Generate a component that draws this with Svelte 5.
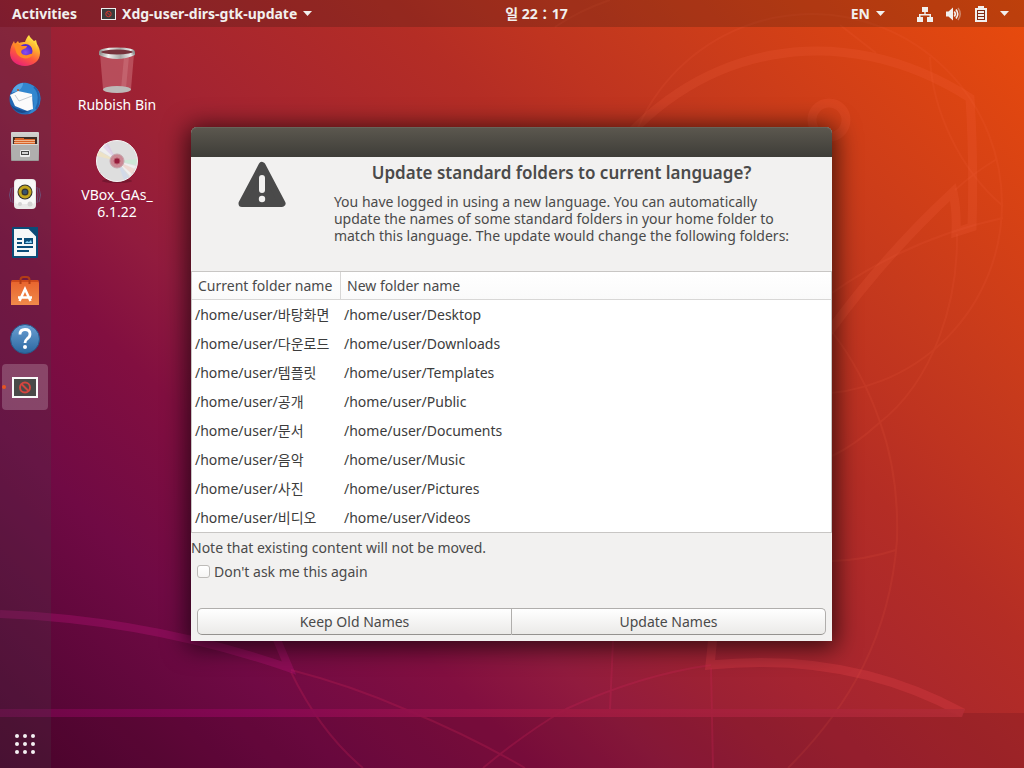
<script>
  const folders = [
    ['바탕화면', 'Desktop'],
    ['다운로드', 'Downloads'],
    ['템플릿', 'Templates'],
    ['공개', 'Public'],
    ['문서', 'Documents'],
    ['음악', 'Music'],
    ['사진', 'Pictures'],
    ['비디오', 'Videos']
  ];
  const home = '/home/user/';
  const dots = [16, 24, 32];
  let skip = $state(false);
</script>

{#snippet caret()}
  <svg class="caret" viewBox="0 0 9 5" aria-hidden="true"><path d="M0 0h9L4.500 5z" fill="#f2f0ee" /></svg>
{/snippet}

<div class="desktop">
  <svg class="wallpaper" viewBox="0 0 1024 768" preserveAspectRatio="none" aria-hidden="true">
    <rect y="713" width="1024" height="55" fill="#3c0014" opacity=".14" />
    <g fill="none" stroke="#ff6a4a" stroke-width="2" opacity=".1">
      <circle cx="812" cy="204" r="190" />
      <path d="M840 25l36 28M930 57C932 110 960 170 1003 206M997 159Q975 172 955 190M1003 218Q910 238 832 293" />
      <path d="M957 234C958 300 935 380 878 424Q855 445 832 456M832 332Q862 370 880 422Q899 475 897 540C890 635 850 706 788 768" />
      <path d="M832 561Q865 560 896 550M555 27Q580 10 610 0" />
    </g>
    <g fill="none" stroke="#ff6a4a" stroke-width="9" opacity=".15">
      <path d="M600 170C690 42 842 16 970 98Q974 160 972 227L956 232Q957 210 953 192Q885 255 829 332" />
      <circle cx="829" cy="120" r="17" />
    </g>
    <path d="M713 636L710 665Q850 651 963 713" fill="none" stroke="#e8444c" stroke-width="9" opacity=".28" />
    <path d="M613 641L610 709M711 668L713 768M711 665Q640 675 566 709Q525 733 483 768M291 670Q350 685 407 710Q470 736 525 768M291 672Q320 732 363 768" fill="none" stroke="#d02458" stroke-width="2" opacity=".25" />
    <path d="M0 614Q150 620 289 668L272 628" fill="none" stroke="#c51482" stroke-width="8" opacity=".3" />
    <defs>
      <linearGradient id="band"><stop stop-color="#700648" /><stop offset=".26" stop-color="#870754" /><stop offset=".6" stop-color="#a01a42" /><stop offset="1" stop-color="#b12c34" /></linearGradient>
    </defs>
    <path d="M0 709H965L962 717H0z" fill="url(#band)" opacity=".9" />
  </svg>

  <header class="topbar">
    <div class="group left">
      <button>Activities</button>
      <button class="app">
        <svg width="15" height="12" viewBox="0 0 15 12" aria-hidden="true">
          <rect x=".5" y=".5" width="14" height="11" fill="#3b3b3b" stroke="#eee" />
          <circle cx="7.500" cy="6" r="2.700" fill="none" stroke="#d8362f" /><path d="M5.600 4.100l3.800 3.800" stroke="#d8362f" />
        </svg>
        Xdg-user-dirs-gtk-update
        {@render caret()}
      </button>
    </div>
    <button class="clock">일 22：17</button>
    <div class="group right">
      <button class="lang">EN {@render caret()}</button>
      <button class="status" aria-label="System menu">
        <svg width="16" height="16" viewBox="0 0 16 16" fill="#f2f0ee" aria-hidden="true">
          <path d="M5 1h6v5H8.700v2H14v3h2v5h-6v-5h2.500V9.500h-9V11H6v5H0v-5h2V8h5.300V6H5z" />
        </svg>
        <svg width="16" height="16" viewBox="0 0 16 16" fill="none" stroke="#f2f0ee" aria-hidden="true">
          <path d="M0 5.500h2.500L7 1.500v13L2.500 10.500H0z" fill="#f2f0ee" stroke="none" />
          <path d="M8.300 5.500q2 2.500 0 5M10 3.500q3.500 4.500 0 9" stroke-width="1.600" />
          <path d="M12 2q4.500 6 0 12" stroke-width="1.500" opacity=".4" />
        </svg>
        <svg width="12" height="16" viewBox="0 0 12 16" aria-hidden="true">
          <path d="M3 0h6v2h3v14H0V2h3z" fill="#f2f0ee" /><path d="M2 4h8v10H2z" fill="#7f2a14" />
          <path d="M3 5h6v2H3zM3 8h6v2H3zM3 11h6v2H3z" fill="#f2f0ee" />
        </svg>
        {@render caret()}
      </button>
    </div>
  </header>

  <nav class="dock" aria-label="Dock">
    <button aria-label="Firefox">
      <svg viewBox="-1 0 48 48">
        <defs>
          <linearGradient id="fx" x1=".8" y1="0" x2=".3" y2="1"><stop stop-color="#fff44f" /><stop offset=".35" stop-color="#ffb12e" /><stop offset=".65" stop-color="#ff5a3c" /><stop offset="1" stop-color="#e81f78" /></linearGradient>
          <radialGradient id="fx2" cx=".5" cy=".6"><stop stop-color="#8a4cf0" /><stop offset="1" stop-color="#582acb" /></radialGradient>
        </defs>
        <path d="M28 8c1 3 3 4 5 6l2-1 1 4c2 3 3 6 3 9 0 8-7 13-15 13S9 34 9 26c0-5 2-9 4-12l1 3 3-3 1 2c2-1 4-1 6-1 1-3 2-5 4-7z" fill="url(#fx)" />
        <circle cx="24.500" cy="24" r="7" fill="url(#fx2)" />
        <path d="M12 17c4-2 7 0 8 2h6c0 2-3 3-5 4-2 2 0 5 3 5 3 1 5-2 8-1-2 5-10 6-14 2-4-3-3-8-6-12z" fill="#ff8a24" />
        <path d="M28 8c1 4 8 7 8 14 0-4 0-4-1-6-3-3-6-2-7-8z" fill="#ffe544" />
      </svg>
    </button>
    <button aria-label="Thunderbird">
      <svg viewBox="0 0 48 48">
        <circle cx="25" cy="24" r="15.500" fill="#2368b4" />
        <path d="M12 17C15 8 22 7 27 8c9 2 15 9 13 19-1 7-6 11-12 12 7-5 8-16 0-20-5-3-10-2-16-2z" fill="#3287cf" />
        <path d="M34 12c6 5 6 15 2 22" fill="none" stroke="#1b559f" stroke-width="2" opacity=".7" />
        <path d="M10 20l8-4 14 3 1 15-6 2-12-5z" fill="#fbfbfb" /><path d="M15 20l4 6 13-5" fill="none" stroke="#c6cbd2" />
        <path d="M12 18c1-6 5-9 11-10 0 4-3 8-9 9z" fill="#58a6e4" /><circle cx="18" cy="15" r="1" fill="#b45324" />
        <path d="M10 29q6 7 18 7-10 6-18-7z" fill="#194989" />
      </svg>
    </button>
    <button aria-label="Files">
      <svg viewBox="0 0 48 48">
        <defs><linearGradient id="fc" x2="0" y2="1"><stop stop-color="#d5d4d3" /><stop offset="1" stop-color="#999897" /></linearGradient></defs>
        <rect x="11" y="9" width="28" height="29" rx="1" fill="url(#fc)" />
        <rect x="13" y="14" width="24" height="7" fill="#3c2b25" />
        <path d="M15 15h9v1h11v5H14z" fill="#d9642a" /><path d="M14 17h21v1H14zM14 19h21v1H14z" fill="#f0b58e" />
        <path d="M12 21h26v16H12z" fill="#b0afae" /><path d="M12 21h26v1H12z" fill="#d8d7d6" /><rect x="20" y="27" width="10" height="7" rx="1.500" fill="#eee" /><rect x="21.500" y="28.500" width="7" height="3" fill="#d3d3d3" stroke="#444" />
      </svg>
    </button>
    <button aria-label="Rhythmbox">
      <svg viewBox="0 0 48 48">
        <path d="M11 17q-3 7 0 14M39 17q3 7 0 14M13 16q-2 8 0 16M37 16q2 8 0 16" fill="none" stroke="#65709c" opacity=".6" />
        <rect x="14" y="8" width="22" height="30" rx="4" fill="#e9e9e8" /><rect x="15" y="9" width="20" height="24" rx="3" fill="#f8f8f7" />
        <circle cx="25" cy="21" r="7.500" fill="#333" /><circle cx="25" cy="21" r="5" fill="none" stroke="#c2a51c" stroke-width="3" /><circle cx="25" cy="21" r="2.300" fill="#37556e" />
        <circle cx="20" cy="33" r="2" fill="#d4d4d3" /><circle cx="30" cy="33" r="2.500" fill="#d4d4d3" />
      </svg>
    </button>
    <button aria-label="LibreOffice Writer">
      <svg viewBox="0 0 48 48">
        <path d="M13 9h16l8 8v21H13z" fill="#f6f7f8" stroke="#0b4c78" stroke-width="2" stroke-linejoin="round" /><path d="M29 8h9v9z" fill="#0b4c78" />
        <path d="M17 20h5M17 24h5M17 28h16M17 32h12" stroke="#0b4c78" stroke-width="2" /><rect x="24" y="19" width="9" height="6" fill="#0b4c78" /><path d="M25 24l2-2 2 1 2-2 1 3z" fill="#8ed1f4" />
      </svg>
    </button>
    <button aria-label="Ubuntu Software">
      <svg viewBox="0 0 48 48">
        <defs><linearGradient id="sw" x2="0" y2="1"><stop stop-color="#e8622c" /><stop offset="1" stop-color="#f08a4a" /></linearGradient></defs>
        <path d="M12 13h26l1 3v22H11V16z" fill="url(#sw)" /><path d="M12 13h26l1 2H11z" fill="#cf4a1c" />
        <path d="M20.500 17v-4q0-3 3-3h3q3 0 3 3v4" fill="none" stroke="#b23d16" stroke-width="2" />
        <path d="M19.500 34l5.500-12 5.500 12M18 30.500h14" fill="none" stroke="#fff" stroke-width="2.500" />
      </svg>
    </button>
    <button aria-label="Help">
      <svg viewBox="0 0 48 48">
        <defs><linearGradient id="hp" x2="0" y2="1"><stop stop-color="#6ba0d4" /><stop offset="1" stop-color="#2b679f" /></linearGradient></defs>
        <circle cx="25" cy="24" r="14.500" fill="url(#hp)" stroke="#27588a" />
        <path d="M20 19.500q0-5 5-5t5 4.500q0 3-3 5-2 1.500-2 4" fill="none" stroke="#fff" stroke-width="2.800" /><circle cx="25" cy="32" r="2" fill="#fff" />
      </svg>
    </button>
    <button class="active" aria-label="Xdg-user-dirs-gtk-update">
      <svg viewBox="0 0 48 48">
        <rect x="13" y="14" width="24" height="19" fill="#4a4a49" stroke="#fafafa" stroke-width="2" />
        <circle cx="25" cy="23.500" r="5" fill="none" stroke="#d2453f" stroke-width="2" /><path d="M21.500 20l7 7" stroke="#d2453f" stroke-width="2" />
        <circle cx="4" cy="23" r="2" fill="#e95420" />
      </svg>
    </button>
    <button class="apps" aria-label="Show Applications">
      <svg viewBox="0 0 48 48" fill="#f4f1f2">
        {#each dots as y}{#each dots as x}<circle cx={x + 1} cy={y} r="2" />{/each}{/each}
      </svg>
    </button>
  </nav>

  <div class="shortcuts">
    <button>
      <svg width="48" height="50" viewBox="0 0 48 50" aria-hidden="true">
        <defs><linearGradient id="rim" x2="1"><stop stop-color="#8f8f8d" /><stop offset=".25" stop-color="#f1f1ef" /><stop offset=".6" stop-color="#a8a8a5" /><stop offset=".9" stop-color="#eee" /><stop offset="1" stop-color="#888" /></linearGradient></defs>
        <path d="M7 8l3 35q14 7 28 0l3-35z" fill="#dc8a92" opacity=".42" />
        <path d="M31 11l5-1-3 32-5 1z" fill="#f2b9bb" opacity=".2" />
        <ellipse cx="24" cy="43.500" rx="14" ry="3.500" fill="#bdbab8" />
        <path d="M6 6v3q18 8 36 0V6z" fill="url(#rim)" /><ellipse cx="24" cy="6" rx="17" ry="3.500" fill="#76333b" stroke="url(#rim)" stroke-width="2" />
      </svg>
      <span>Rubbish Bin</span>
    </button>
    <button>
      <svg width="48" height="50" viewBox="0 0 48 50" aria-hidden="true">
        <ellipse cx="24" cy="45" rx="15" ry="2" fill="#000" opacity=".2" />
        <circle cx="24" cy="25" r="20.500" fill="#dedede" stroke="#f7f7f7" />
        <path d="M24 25L6 14l6-7zM24 25l19 5-6 10z" fill="#fff" opacity=".5" /><path d="M24 25L10 11l5-4z" fill="#d8c7e9" opacity=".6" /><path d="M24 25L4 20l2-5z" fill="#f3e4bc" opacity=".7" /><path d="M24 25l20-2-1 6z" fill="#c8ecd4" opacity=".7" /><path d="M24 25l18 8-3 5z" fill="#efd1c7" opacity=".7" /><path d="M24 25l12 16-5 3z" fill="#c9d7ef" opacity=".6" />
        <circle cx="24" cy="25" r="7" fill="#cb8995" stroke="#c6a7ae" /><circle cx="24" cy="25" r="3" fill="#961c3c" stroke="#b45768" />
      </svg>
      <span>VBox_GAs_<br />6.1.22</span>
    </button>
  </div>

  <form class="dialog" role="dialog" aria-labelledby="heading" onsubmit={(e) => e.preventDefault()}>
    <div class="titlebar"></div>
    <div class="intro">
      <svg width="48" height="48" viewBox="0 0 48 48" aria-hidden="true">
        <path d="M24 4.500L44 42.500H4z" fill="#4a4a4a" stroke="#4a4a4a" stroke-width="7" stroke-linejoin="round" />
        <path d="M24 17v12" stroke="#f2f1f0" stroke-width="6" stroke-linecap="round" /><circle cx="24" cy="38" r="3.200" fill="#f2f1f0" />
      </svg>
      <div>
        <h1 id="heading">Update standard folders to current language?</h1>
        <p>You have logged in using a new language. You can automatically<br />update the names of some standard folders in your home folder to<br />match this language. The update would change the following folders:</p>
      </div>
    </div>
    <table>
      <thead>
        <tr><th>Current folder name</th><th>New folder name</th></tr>
      </thead>
      <tbody>
        {#each folders as [current, next]}
          <tr><td>{home}{current}</td><td>{home}{next}</td></tr>
        {/each}
      </tbody>
    </table>
    <p class="note">Note that existing content will not be moved.</p>
    <label class="check"><input type="checkbox" bind:checked={skip} />Don't ask me this again</label>
    <div class="actions">
      <button type="button">Keep Old Names</button>
      <button type="submit">Update Names</button>
    </div>
  </form>
</div>

<style>
  :global(body) { margin: 0; }
  .desktop {
    position: relative;
    display: grid;
    grid-template: 27px 1fr / 51px 1fr;
    min-height: 100vh;
    overflow: hidden;
    font: 14px/17px "Noto Sans", "Noto Sans CJK KR", sans-serif;
    color: #4a4a4a;
    background: linear-gradient(45deg, #4b042f, #700a44 19%, #820f40 30%, #911b3e 37%, #9c2134 44%, #a42431 49%, #b42d25 64%, #bf3420 71%, #c5391d 76%, #e94b0c);
  }
  .desktop * { box-sizing: border-box; }
  .wallpaper { position: absolute; inset: 0; width: 100%; height: 100%; }
  button { margin: 0; padding: 0; border: 0; background: none; font: inherit; color: inherit; }
  svg { display: block; flex: none; }

  .topbar {
    position: relative;
    grid-area: 1 / 1 / 2 / -1;
    display: grid;
    grid-template-columns: 1fr auto 1fr;
    align-items: center;
    padding: 0 15px 0 12px;
    background: rgba(20, 20, 10, 0.2);
    color: #f2f0ee;
    font-weight: 700;
    text-shadow: 0 1px 1px rgba(0, 0, 0, 0.4);
  }
  .group { display: flex; align-items: center; }
  .left { gap: 24px; }
  .right { justify-content: flex-end; gap: 32px; }
  .app, .lang, .status { display: flex; align-items: center; gap: 6px; }
  .status { gap: 13px; }
  .caret { width: 9px; height: 5px; }
  .clock { padding-left: 52px; }

  .dock {
    position: relative;
    grid-area: 2 / 1;
    display: flex;
    flex-direction: column;
    background: rgba(70, 60, 70, 0.25);
  }
  .dock button { height: 48px; padding: 0; }
  .dock svg { width: 48px; height: 48px; }
  .dock .active { height: 46px; margin: 1px 3px 1px 2px; border-radius: 4px; background: rgba(255, 255, 255, 0.2); }
  .dock .active svg { margin: 0 -2px; }
  .dock .apps { margin-top: auto; }

  .shortcuts {
    position: relative;
    grid-area: 2 / 2;
    display: flex;
    flex-direction: column;
    align-items: flex-start;
    gap: 23px;
    padding: 19px 18px;
    color: #fff;
    text-shadow: 1px 1px 1px #000;
  }
  .shortcuts button { display: flex; flex-direction: column; align-items: center; width: 96px; }

  .dialog {
    position: relative;
    z-index: 1;
    grid-area: 1 / 1 / -1 / -1;
    place-self: center;
    width: 100%;
    max-width: 641px;
    margin-right: 1px;
    border-radius: 6px 6px 0 0;
    background: #f2f1f0;
    box-shadow: 0 3px 24px 4px rgba(0, 0, 0, 0.65);
  }
  .titlebar {
    height: 30px;
    border-radius: 6px 6px 0 0;
    background: linear-gradient(#5c584f, #3e3d38);
    box-shadow: inset 0 1px #68645a;
  }
  .intro { display: flex; justify-content: center; gap: 48px; padding: 4px 0 27px 4px; }
  h1 { margin: 0 0 8px; font-size: 17px; line-height: 24px; font-weight: 600; text-align: center; }
  p { margin: 0; }
  table {
    width: 100%;
    border: 1px solid #c8c6c4;
    border-spacing: 0;
    background: #fff;
    color: #3c3c3c;
  }
  th {
    height: 28px;
    padding: 0 6px;
    border-bottom: 1px solid #d8d7d6;
    background: linear-gradient(#fff, #fafafa);
    color: #4a4a4a;
    font-weight: 400;
    text-align: left;
  }
  th:first-child { width: 149px; border-right: 1px solid #d8d7d6; white-space: nowrap; }
  td { height: 29px; padding: 0 3px; white-space: nowrap; }
  .note { padding: 6px 0 7px; }
  .check { display: inline-flex; align-items: center; gap: 4px; padding-left: 6px; }
  .check input {
    appearance: none;
    width: 13px;
    height: 13px;
    margin: 0;
    border: 1px solid #bdbbb8;
    border-radius: 3px;
    background: linear-gradient(#fff, #f6f5f4);
  }
  .check input:checked { background: #e95420; }
  .actions { display: flex; padding: 27px 6px 6px; }
  .actions button {
    flex: 1 1 0;
    height: 27px;
    border: 1px solid #b0aeac;
    border-bottom-color: #94928f;
    border-radius: 5px 0 0 5px;
    background: linear-gradient(#fff, #ebeae8);
  }
  .actions button + button { border-left: 0; border-radius: 0 5px 5px 0; }
</style>
